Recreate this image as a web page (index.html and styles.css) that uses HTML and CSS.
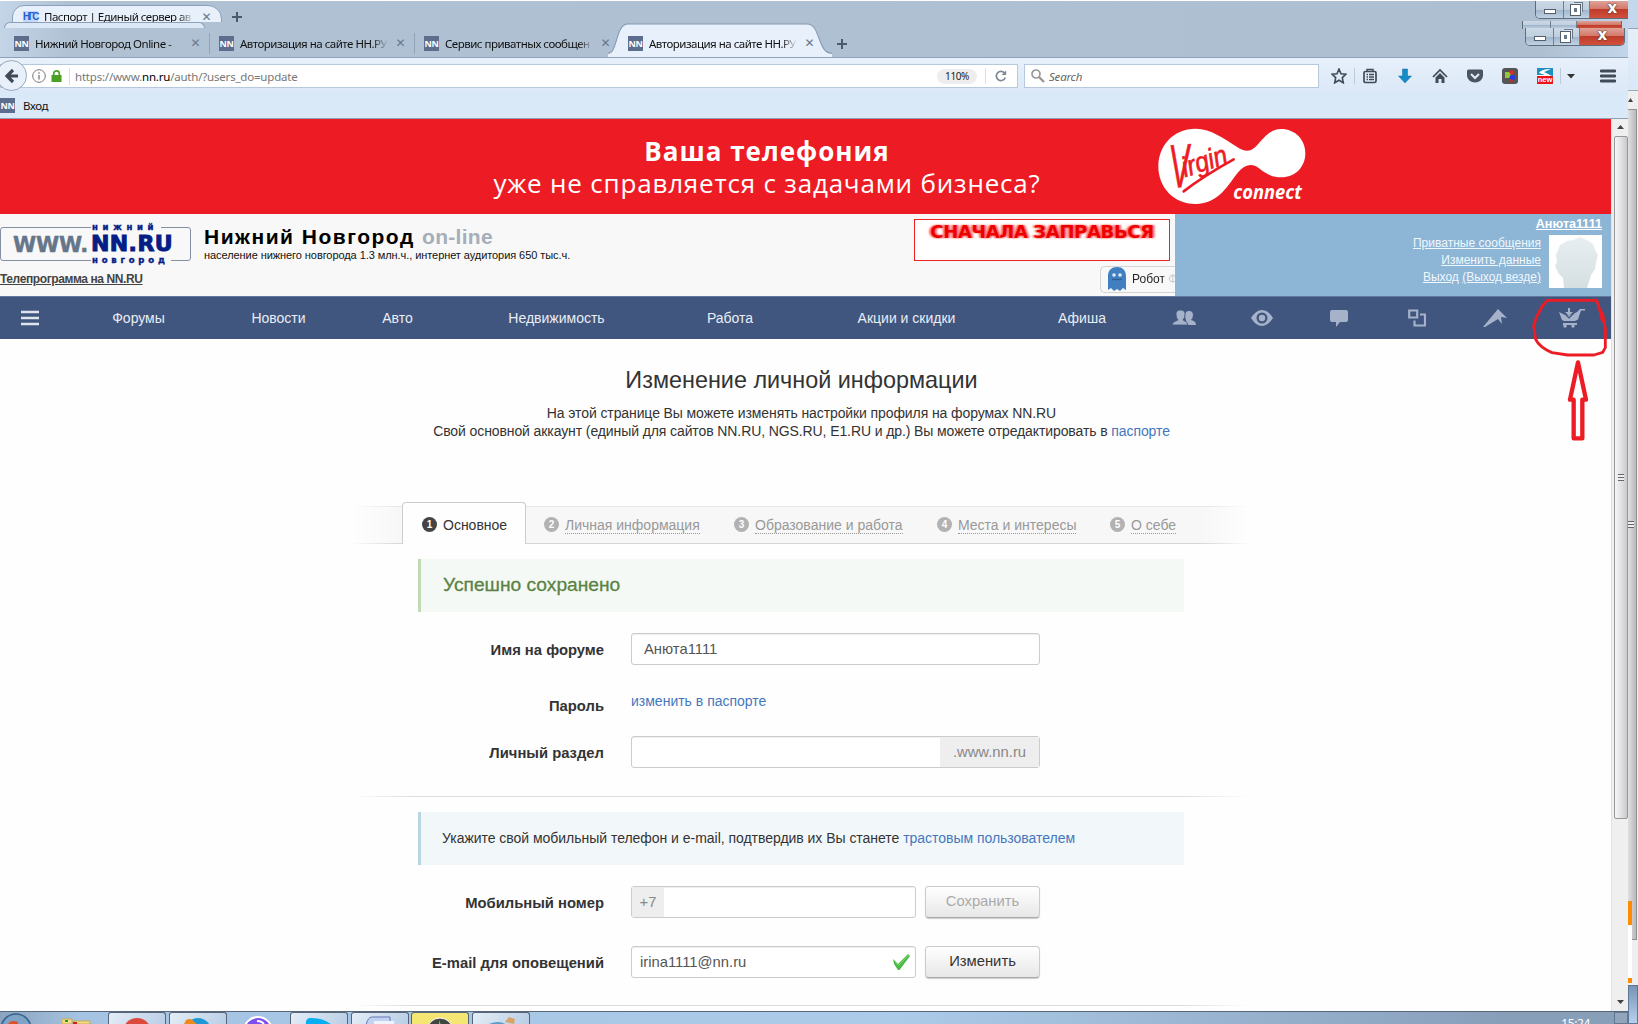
FILE: index.html
```html
<!DOCTYPE html>
<html lang="ru">
<head>
    <meta charset="UTF-8">
    <title>Авторизация на сайте НН.РУ</title>
    <link rel="stylesheet" href="styles.css">
</head>
<body>
<div class="desktop">
    <div class="window">
        <div class="titlebar">
            <div class="back-tabs">
                <div class="tab tab-back"><span class="ngs">НГС</span><span class="tab-text">Паспорт | Единый сервер ав</span><b class="x">✕</b></div>
                <svg class="plus" viewBox="0 0 10 10"><path d="M5 0v10M0 5h10"/></svg>
            </div>
            <div class="front-tabs">
                <div class="tab"><span class="nn">NN</span><span class="tab-text">Нижний Новгород Online -</span><b class="x">✕</b></div>
                <div class="tab"><span class="nn">NN</span><span class="tab-text">Авторизация на сайте НН.РУ</span><b class="x">✕</b></div>
                <div class="tab no-line"><span class="nn">NN</span><span class="tab-text">Сервис приватных сообщен</span><b class="x">✕</b></div>
                <div class="tab active">
                    <svg class="tab-shape" viewBox="0 0 224 32" preserveAspectRatio="none"><path d="M0 29C10 29 8 1 20 1H199C213 1 209 29 224 29V32H0z" fill="#e7f0fb"/><path d="M0 28.500C10 28.500 7 1 20 1H199C213 1 209 28.500 224 28.500" fill="none" stroke="#8499b2"/></svg>
                    <span class="nn">NN</span><span class="tab-text">Авторизация на сайте НН.РУ</span><b class="x">✕</b>
                </div>
                <svg class="plus" viewBox="0 0 10 10"><path d="M5 0v10M0 5h10"/></svg>
            </div>
            <div class="old-edge"></div>
            <div class="controls controls-back"><i></i><i></i><i class="close"></i></div>
            <div class="controls controls-top"><i><u></u></i><i><s></s></i><i class="close">x</i></div>
            <div class="controls controls-front"><i><u></u></i><i><s></s></i><i class="close">x</i></div>
        </div>

        <div class="toolbar">
            <div class="urlbar">
                <div class="back-btn"><svg width="16" height="16" viewBox="0 0 16 16"><path d="M14 8H3M9 2L3 8l6 6" fill="none" stroke="#414b57" stroke-width="3.200"/></svg></div>
                <svg class="info" width="14" height="14" viewBox="0 0 14 14"><circle cx="7" cy="7" r="6.300" fill="none" stroke="#777"/><path d="M7 6v4.500M7 3.200v1.500" stroke="#777" stroke-width="1.300"/></svg>
                <svg class="lock" width="11" height="12" viewBox="0 0 11 12"><path d="M2.700 6V3.500a2.800 2.600 0 0 1 5.600 0V6" fill="none" stroke="#4aa02c" stroke-width="1.700"/><rect x=".5" y="5" width="10" height="7" fill="#4a9f25"/></svg>
                <span class="url">https://www.<b>nn.ru</b>/auth/?users_do=update</span>
                <span class="zoom">110%</span>
                <svg class="reload" width="12" height="12" viewBox="0 0 12 12"><path d="M9.500 3A4.600 4.600 0 1 0 10.300 7.500" fill="none" stroke="#7d8896" stroke-width="1.700"/><path d="M11.200.5V5H6.500z" fill="#7d8896"/></svg>
            </div>
            <div class="searchbar">
                <svg width="14" height="14" viewBox="0 0 14 14"><circle cx="5" cy="5" r="4" fill="none" stroke="#999" stroke-width="1.700"/><path d="M8 8l5 5" stroke="#999" stroke-width="2.400"/></svg>
                <span>Search</span>
            </div>
            <div class="tools">
                <svg class="split" viewBox="0 0 16 16"><path d="M8 1l2 4.700 5 .5-3.700 3.400 1 5.200L8 12.200l-4.300 2.600 1-5.200L1 6.200l5-.5z" fill="none" stroke="#414b57" stroke-width="1.600"/></svg>
                <svg viewBox="0 0 16 16"><rect x="2" y="3.500" width="12" height="11" rx="1.500" fill="none" stroke="#414b57" stroke-width="1.700"/><path d="M5 3V1.500h6V3M4.500 6.500h1.500M7 6.500h5M4.500 9h1.500M7 9h5M4.500 11.500h1.500M7 11.500h5" stroke="#414b57" stroke-width="1.400" fill="none"/></svg>
                <svg viewBox="0 0 16 16"><path d="M5.500 1h5v7h4L8 15 1.500 8h4z" fill="#168cc9" stroke="#0f6fa6" stroke-width=".5"/></svg>
                <svg viewBox="0 0 16 16"><path d="M1 9l7-7 7 7" fill="none" stroke="#414b57" stroke-width="1.700"/><path d="M3.500 9.500L8 5l4.500 4.500V15h-3v-4h-3v4h-3z" fill="#414b57"/></svg>
                <svg viewBox="0 0 16 16"><path d="M0 3q0-1.500 1.500-1.500h13Q16 1.500 16 3v4.500a8 7 0 0 1-16 0z" fill="#4a5462"/><path d="M4 6l4 4 4-4" fill="none" stroke="#e3edf8" stroke-width="2"/></svg>
                <svg viewBox="0 0 16 16"><rect width="16" height="16" rx="3" fill="#555"/><path d="M3 4h4l2 2-2 4H3z" fill="#91c83a"/><circle cx="10" cy="4.500" r="2.300" fill="#dc2b2b"/><rect x="8" y="7" width="5" height="5" rx="2" fill="#2439e7"/><circle cx="9" cy="12.500" r="1.500" fill="#d92222"/></svg>
                <svg class="split" viewBox="0 0 16 16"><rect width="16" height="16" fill="#1e8fbe"/><path d="M2 5q2-4 12-4L7 4l8 4H0V7h8z" fill="#fff"/><rect y="8" width="16" height="8" rx="1" fill="#f01313"/><text x="8" y="14.300" text-anchor="middle" class="new">new</text></svg>
                <svg class="caret" viewBox="0 0 16 16"><path d="M4 6h8l-4 4.500z" fill="#333"/></svg>
                <svg viewBox="0 0 16 16"><path d="M1 3h14M1 8h14M1 13h14" stroke="#414b57" stroke-width="2.800" stroke-linecap="round"/></svg>
            </div>
        </div>
        <div class="bookmarks"><span class="nn">NN</span><span>Вход</span></div>

        <div class="viewport">
            <div class="page">
                <div class="banner">
                    <div class="banner-text">
                        <strong>Ваша телефония</strong>
                        <span>уже не справляется с задачами бизнеса?</span>
                    </div>
                    <svg class="virgin" width="150" height="80" viewBox="0 0 450 240">
                        <path d="M115 2C163 2 206 35 239 56C262 72 280 72 295 57C318 34 336 3 372 3C415 3 445 35 445 76C445 117 415 148 373 148C346 148 327 138 306 121C286 105 264 109 244 132C216 165 188 228 115 228C50 228 4 178 4 115C4 52 50 2 115 2z" fill="#fff"/>
                        <g class="virgin-name">
                            <text class="virgin-v" transform="translate(42 180) rotate(-4)" textLength="62" lengthAdjust="spacingAndGlyphs">V</text>
                            <text transform="translate(84 148) rotate(-18)" textLength="140" lengthAdjust="spacingAndGlyphs">irgin</text>
                        </g>
                        <path d="M80 190C125 155 165 130 230 94" fill="none" stroke="#ed1c24" stroke-width="8" stroke-linecap="round"/>
                        <text x="229" y="212" textLength="205" lengthAdjust="spacingAndGlyphs" class="virgin-connect">connect</text>
                    </svg>
                </div>

                <div class="header">
                    <div class="brand">
                        <div class="brand-row">
                            <div class="logo">
                                <span class="logo-www">WWW.</span>
                                <div class="logo-nn"><small>нижний</small><b>NN.RU</b><small class="low">новгород</small></div>
                            </div>
                            <div class="brand-text">
                                <div class="brand-title">Нижний Новгород <span>on-line</span></div>
                                <div class="brand-sub">население нижнего новгорода 1.3 млн.ч., интернет аудитория 650 тыс.ч.</div>
                            </div>
                        </div>
                        <a class="tele">Телепрограмма на NN.RU</a>
                    </div>
                    <div class="promo">
                        <div class="promo-box">СНАЧАЛА ЗАПРАВЬСЯ</div>
                        <div class="robot">
                            <svg width="18" height="24" viewBox="0 0 18 24"><path d="M0 9C0 3 4 0 9 0s9 3 9 9v14l-3-2-3 3-3-2-3 2-3-3-3 2z" fill="#427fc0"/><circle cx="6" cy="8" r="1.800" fill="#dcecff"/><circle cx="12" cy="8" r="1.800" fill="#dcecff"/><path d="M4 13l2-1 2 1 2-1 2 1 2-1" fill="none" stroke="#235486"/></svg>
                            <span>Робот Ф</span>
                        </div>
                    </div>
                    <div class="user">
                        <a class="user-name">Анюта1111</a>
                        <div class="user-row">
                            <div class="user-links">
                                <a>Приватные сообщения</a>
                                <a>Изменить данные</a>
                                <div><a>Выход</a> <a>(Выход везде)</a></div>
                            </div>
                            <svg class="avatar" width="53" height="53" viewBox="0 0 53 53"><defs><linearGradient id="av" x2="0" y2="1"><stop stop-color="#e8eef1"/><stop offset="1" stop-color="#d5dfe1"/></linearGradient></defs><rect width="53" height="53" fill="#fff"/><path d="M15 53L14 43 10 39 6 31 8 27 7 20 11 10 18 6 24 5 31 2 38 5 44 9 46 15 49 20 47 27 46 34 42 40 38 53z" fill="url(#av)"/></svg>
                        </div>
                    </div>
                </div>

                <div class="nav">
                    <svg width="18" height="16" viewBox="0 0 18 16"><path d="M0 2h18M0 8h18M0 14h18" stroke="#dfe4ec" stroke-width="2.400"/></svg>
                    <a>Форумы</a>
                    <a>Новости</a>
                    <a>Авто</a>
                    <a>Недвижимость</a>
                    <a>Работа</a>
                    <a>Акции и скидки</a>
                    <a class="last">Афиша</a>
                    <svg class="ico" width="24" height="16" viewBox="0 0 24 16"><path d="M13 6q0-5 4-5t4 4q0 3-2 5 5 1 5 5h-9z"/><path d="M0 15q0-3 6-5Q4 8 4 4q0-4 4.500-4T13 4q0 4-2 6 5 2 5 5z" stroke="#40567f" stroke-width=".8"/></svg>
                    <svg class="ico" width="22" height="16" viewBox="0 0 22 16"><path fill-rule="evenodd" d="M0 8Q5 0 11 0t11 8q-5 8-11 8T0 8zM11 2.500a5.500 5.500 0 1 0 0 11a5.500 5.500 0 0 0 0-11z"/><circle cx="11" cy="8" r="3.200"/></svg>
                    <svg class="ico" width="18" height="18" viewBox="0 0 18 18"><path d="M2 1h14q2 0 2 2v8q0 2-2 2h-6l-4 5v-5H2q-2 0-2-2V3q0-2 2-2z"/></svg>
                    <svg width="18" height="18" viewBox="0 0 18 18"><path d="M1.200 1.500h8v7h-8zM12 5.500h5v11H6.500v-5" fill="none" stroke="#a5b2c9" stroke-width="2.200"/></svg>
                    <svg class="ico" width="24" height="18" viewBox="0 0 24 18"><path d="M15 0l9 9-6-1 1 7-4-5-13 8H0z"/></svg>
                    <svg class="ico" width="26" height="20" viewBox="0 0 26 20"><path d="M0 4l4 2 6 2 4-2 4-2 3-3h5v1.500h-4l-3 9-3 1.500H5L3 12zM9 0h2v4h3l-4 4-4-4h3zM4 15h14v2H4z"/><circle cx="6" cy="18" r="1.700"/><circle cx="14" cy="18" r="1.700"/><path d="M5 5l5 5 5-5" fill="none" stroke="#40567f" stroke-width="1.200"/></svg>
                </div>

                <div class="intro">
                    <h1>Изменение личной информации</h1>
                    <p>На этой странице Вы можете изменять настройки профиля на форумах NN.RU</p>
                    <p>Свой основной аккаунт (единый для сайтов NN.RU, NGS.RU, E1.RU и др.) Вы можете отредактировать в <a>паспорте</a></p>
                </div>

                <div class="settings">
                    <div class="steps">
                        <div class="step current"><i>1</i><span>Основное</span></div>
                        <div class="step s2"><i>2</i><span>Личная информация</span></div>
                        <div class="step s3"><i>3</i><span>Образование и работа</span></div>
                        <div class="step s4"><i>4</i><span>Места и интересы</span></div>
                        <div class="step s5"><i>5</i><span>О себе</span></div>
                    </div>

                    <div class="note success">Успешно сохранено</div>
                    <div class="row row-name">
                        <label>Имя на форуме</label>
                        <div class="field field-name">Анюта1111</div>
                    </div>
                    <div class="row row-pass">
                        <label>Пароль</label>
                        <a>изменить в паспорте</a>
                    </div>
                    <div class="row row-section">
                        <label>Личный раздел</label>
                        <div class="field"><span class="suffix">.www.nn.ru</span></div>
                    </div>
                    <div class="line"></div>
                    <div class="note trust">Укажите свой мобильный телефон и e-mail, подтвердив их Вы станете&nbsp;<a>трастовым пользователем</a></div>
                    <div class="row row-phone">
                        <label>Мобильный номер</label>
                        <div class="field short"><span class="prefix">+7</span></div>
                        <div class="btn disabled">Сохранить</div>
                    </div>
                    <div class="row row-mail">
                        <label>E-mail для оповещений</label>
                        <div class="field short mail">irina1111@nn.ru
                            <svg width="17" height="16" viewBox="0 0 17 16"><path d="M0 5l5 5L15 0l2 2L6.500 16H5L1 10z" fill="#4cb848"/><path d="M1 6l4.500 5.500L15.500 1" fill="none" stroke="#7fdc70"/></svg>
                        </div>
                        <div class="btn">Изменить</div>
                    </div>
                    <div class="line line-last"></div>
                </div>
            </div>
            <div class="scrollbar">
                <span class="arrow up"></span>
                <div class="thumb"><i></i></div>
                <span class="arrow down"></span>
            </div>
        </div>

        <div class="taskbar">
            <div class="task start"><svg width="34" height="12" viewBox="0 0 34 12"><circle cx="16" cy="17" r="15" fill="#7fa3c6" stroke="#35618f" stroke-width="1.500"/><path d="M8 12q3-5 10-2v2z" fill="#e04f25"/></svg></div>
            <div class="task plain"><svg width="30" height="12" viewBox="0 0 30 12"><path d="M0 7h10v5H0zM12 9h16v3H12z" fill="#f3dd8c" stroke="#c9a848"/><path d="M3 8h3v2H3z" fill="#1aa51a"/><path d="M11 10h4v2h-4z" fill="#c22"/></svg></div>
            <div class="task"><svg width="28" height="12" viewBox="0 0 28 12"><circle cx="14" cy="19" r="14" fill="#dc4a3d"/></svg></div>
            <div class="task"><svg width="28" height="12" viewBox="0 0 28 12"><circle cx="14" cy="18" r="13" fill="#1d9ad6"/><path d="M0 12q1-7 7-6l7 6z" fill="#f08a1c"/></svg></div>
            <div class="task plain"><svg width="28" height="12" viewBox="0 0 28 12"><circle cx="14" cy="19" r="14" fill="#7b50ef" stroke="#fff" stroke-width="2"/><path d="M13 9q6 0 7 4" fill="none" stroke="#fff" stroke-width="2"/></svg></div>
            <div class="task"><svg width="28" height="12" viewBox="0 0 28 12"><path d="M1 12Q0 4 7 5q12 0 20 7z" fill="#07aef2"/></svg></div>
            <div class="task"><svg width="32" height="12" viewBox="0 0 32 12"><path d="M2 12q2-8 6-8h18v8" fill="#c2d3f2" stroke="#6279b5"/><path d="M10 8h20v4H10z" fill="#eef3fc"/></svg></div>
            <div class="task yellow"><svg width="28" height="12" viewBox="0 0 28 12"><circle cx="14" cy="18" r="13" fill="#414641" stroke="#fff"/><path d="M13 7l2 5h-2z" fill="#56d34c"/></svg></div>
            <div class="task"><svg width="32" height="12" viewBox="0 0 32 12"><path d="M4 12q10-4 16 0" fill="none" stroke="#5f9bc8" stroke-width="2"/><path d="M20 9l4-5 6 2-1 5z" fill="#d9a468"/></svg></div>
            <span class="clock">15:24</span>
            <span class="show-desktop"></span>
        </div>
    </div>

    <!-- edge of the window behind -->
    <div class="behind">
        <div class="behind-title"></div>
        <div class="behind-tools"></div>
        <div class="behind-top"><span class="arrow up"></span></div>
        <div class="behind-thumb"><i></i></div>
        <div class="behind-end"></div>
        <div class="behind-task"></div>
        <span class="orange o1"></span>
        <span class="orange o2"></span>
    </div>

    <svg class="marker" width="100" height="160" viewBox="1140 510 300 480">
        <path d="M1222 541H1370L1378 565 1387 603V578L1396 625V683L1388 697 1362 705H1283L1236 698Q1198 681 1187 658L1181 618 1190 590 1207 558z" fill="none" stroke="#ed1c24" stroke-width="8.500" stroke-linejoin="round"/>
        <path d="M1314 727L1338 839H1327V955H1301V839H1290z" fill="none" stroke="#ed1c24" stroke-width="13" stroke-linejoin="round"/>
    </svg>
</div>
</body>
</html>
```

FILE: styles.css
```css
* {
    box-sizing: border-box;
}
body {
    margin: 0;
    background: #fff;
    font-family: "Liberation Sans", Arial, sans-serif;
    font-size: 14px;
    color: #333;
}
svg {
    display: block;
    flex: none;
}
.desktop {
    position: relative;
    display: flex;
    width: 1638px;
    height: 1024px;
    overflow: hidden;
}
.window {
    display: flex;
    flex-direction: column;
    width: 1628px;
}

/* title bar */
.titlebar {
    position: relative;
    height: 58px;
    border-top: 1px solid #fff;
    border-bottom: 1px solid #8ea2ba;
    background: linear-gradient(90deg, #c3d5e6 0, #afc1d3 70px, #adbfd1 1540px, #c3d5e9 100%);
    font-family: "Noto Sans", sans-serif;
    font-size: 11.500px;
    letter-spacing: -0.5px;
    color: #111;
}
.back-tabs {
    display: flex;
    align-items: center;
    height: 21px;
    padding: 2px 0 0 12px;
    overflow: hidden;
}
.front-tabs {
    display: flex;
    height: 35px;
    padding-top: 8px;
}
.tab {
    position: relative;
    display: flex;
    align-items: center;
    width: 205px;
    height: 28px;
    padding: 0 5px 2px 14px;
}
.front-tabs .tab:after {
    content: "";
    position: absolute;
    right: -5px;
    top: 3px;
    height: 21px;
    border-right: 1px solid #91a4ba;
}
.front-tabs .no-line:after,
.front-tabs .active:after {
    display: none;
}
.tab-back {
    width: 210px;
    height: 30px;
    margin-top: 14px;
    padding: 0 10px 6px;
    border: 1px solid #8ba0b8;
    border-radius: 12px 14px 0 0;
    background: #e7f0fb;
}
.tab-text {
    flex: 1;
    margin: 0 4px 0 6px;
    overflow: hidden;
    white-space: nowrap;
    -webkit-mask-image: linear-gradient(90deg, #000 88%, transparent 98%);
    mask-image: linear-gradient(90deg, #000 88%, transparent 98%);
}
.tab-shape {
    position: absolute;
    left: -6px;
    top: -7px;
    width: 224px;
    height: 34px;
}
.active {
    margin-left: -1px;
}
.active .nn, .active .tab-text, .active .x {
    position: relative;
}
.nn {
    flex: none;
    width: 15px;
    height: 15px;
    background: #5c6d8e;
    color: #fff;
    font: bold 9px/15px "Open Sans", sans-serif;
    letter-spacing: -0.3px;
    text-align: center;
}
.ngs {
    width: 15px;
    background: #c5d9fa;
    color: #2560d8;
    font: bold 10px/12px "Liberation Sans", sans-serif;
    letter-spacing: -1.8px;
}
.x {
    font: bold 12px/12px "DejaVu Sans", sans-serif;
    color: #68788c;
}
.plus {
    width: 10px;
    height: 10px;
    stroke: #4c5a6b;
    stroke-width: 2;
}
.back-tabs .plus {
    margin: 8px 0 0 10px;
}
.front-tabs .plus {
    margin: 9px 0 0 18px;
}
.old-edge {
    position: absolute;
    left: 4px;
    top: 21px;
    width: 201px;
    height: 6px;
    border: 1px solid #8ba0b8;
    border-bottom: 0;
    border-radius: 14px 14px 0 0;
    background: #dce8f5;
}
.controls {
    position: absolute;
    display: grid;
    grid-template-columns: 28px 26px 46px;
    width: 100px;
    height: 18px;
    overflow: hidden;
    border: 1px solid #5f6c7b;
    border-top: 0;
    border-radius: 0 0 5px 5px;
}
.controls i {
    display: flex;
    align-items: center;
    justify-content: center;
    border-right: 1px solid #6f7e90;
    background: linear-gradient(#ccd9e6, #c0cfde 50%, #9fb4ca 51%, #c1d2e3);
    font: bold 15px/14px "DejaVu Sans", sans-serif;
    color: #fff;
    text-shadow: 0 0 2px #433, 0 0 1px #433;
}
.controls .close {
    padding: 0 2px 3px 0;
    border: 0;
    background: linear-gradient(#dfa399, #d4796b 45%, #bd3d2a 50%, #d2503b);
}
.controls u {
    width: 12px;
    height: 5px;
    margin-top: 4px;
    border: 1px solid #555f6c;
    background: #fff;
}
.controls s {
    width: 9px;
    height: 10px;
    margin: 1px 3px 0 0;
    border: 3px solid #fff;
    outline: 1px solid #555f6c;
    background: #66768a;
    box-shadow: 2px -2px 0 #dde5ee, 3px -3px 0 #68788a;
}
.controls-top {
    right: -7px;
    top: 0;
}
.controls-back {
    right: 6px;
    top: 20px;
    height: 8px;
    border-bottom: 0;
    border-radius: 0;
}
.controls-front {
    right: 3px;
    top: 27px;
}

/* toolbar */
.toolbar {
    display: flex;
    height: 36px;
    padding-top: 6px;
    background: linear-gradient(#e7f0fb, #dbe8f7);
    font-family: "Noto Sans", sans-serif;
}
.urlbar {
    position: relative;
    display: flex;
    flex: none;
    align-items: center;
    width: 1018px;
    height: 24px;
    border: 1px solid #b6c8db;
    background: #fff;
}
.back-btn {
    position: absolute;
    left: -5px;
    top: -5px;
    display: flex;
    align-items: center;
    justify-content: center;
    width: 31px;
    height: 31px;
    border: 1px solid #97a9bd;
    border-radius: 50%;
    background: #e8f0fa;
}
.info {
    margin-left: 31px;
}
.lock {
    margin-left: 5px;
}
.url {
    flex: 1;
    margin-left: 7px;
    padding-left: 5px;
    border-left: 1px solid #ddd;
    font-size: 11.500px;
    line-height: 17px;
    letter-spacing: -0.2px;
    color: #777;
}
.url b {
    font-weight: normal;
    color: #000;
}
.zoom {
    width: 40px;
    margin-right: 8px;
    border-radius: 8px;
    background: #eee;
    font-size: 10px;
    line-height: 15px;
    text-align: center;
    letter-spacing: -0.4px;
    color: #222;
}
.reload {
    box-sizing: content-box;
    padding: 2px 9px;
    border-left: 1px solid #ddd;
    margin-right: 1px;
}
.searchbar {
    display: flex;
    flex: none;
    align-items: center;
    gap: 4px;
    width: 295px;
    height: 24px;
    margin-left: 6px;
    padding-left: 6px;
    border: 1px solid #b6c8db;
    background: #fff;
    font-size: 11.500px;
    font-style: italic;
    letter-spacing: -0.2px;
    color: #666;
}
.tools {
    display: grid;
    flex: none;
    grid-template-columns: 31px repeat(6, 35px) 28px 21px;
    align-items: center;
    height: 24px;
    margin-left: 12px;
}
.tools svg {
    width: 16px;
    height: 16px;
}
.tools .split {
    box-sizing: content-box;
    padding-right: 7px;
    border-right: 1px solid #bccbdb;
}
.tools .caret {
    margin-left: -9px;
}
.new {
    font: bold 7.500px "Liberation Sans", sans-serif;
    fill: #fff;
}
.bookmarks {
    display: flex;
    align-items: center;
    gap: 8px;
    height: 25px;
    border-bottom: 1px solid #8da0b6;
    background: #dae9f8;
    font-family: "Noto Sans", sans-serif;
    font-size: 11.500px;
    letter-spacing: -0.4px;
    color: #111;
}

/* page */
.viewport {
    display: flex;
    height: 893px;
}
.page {
    width: 1611px;
    overflow: hidden;
    background: #fefefe;
}
.banner {
    display: flex;
    height: 95px;
    background: #ed1c24;
    color: #fff;
    font-family: "Open Sans", "Noto Sans", sans-serif;
}
.banner-text {
    display: flex;
    flex-direction: column;
    align-items: center;
    width: 550px;
    margin: 15px 0 0 492px;
    white-space: nowrap;
}
.banner-text strong {
    font-size: 26px;
    line-height: 34px;
    letter-spacing: 1px;
}
.banner-text span {
    font-size: 26px;
    line-height: 30px;
    letter-spacing: 0.8px;
}
.virgin {
    margin: 9px 0 0 115px;
}
.virgin-name {
    font: italic 84px "Liberation Sans", sans-serif;
    fill: #ed1c24;
    stroke: #ed1c24;
    stroke-width: 2;
}
.virgin-v {
    font-size: 185px;
}
.virgin-connect {
    font: italic bold 56px "Open Sans", sans-serif;
    fill: #fff;
}
.header {
    display: flex;
    height: 82px;
    background: #f8f8f8;
    color: #111;
}
.brand {
    width: 914px;
    padding-top: 11px;
}
.brand-row {
    display: flex;
    height: 45px;
}
.logo {
    display: flex;
    width: 191px;
    height: 34px;
    margin: 2px 13px 0 0;
    padding-left: 12px;
    border: 1px solid #8290a3;
    border-radius: 3px;
}
.logo-www {
    width: 78px;
    font: bold 21px/35px "DejaVu Sans", sans-serif;
    letter-spacing: -0.2px;
    -webkit-text-stroke: 0.5px #65758a;
    color: #65758a;
}
.logo-nn {
    display: flex;
    flex-direction: column;
    width: 84px;
    height: 42px;
    margin-top: -5px;
    font-family: "DejaVu Sans", sans-serif;
    color: #061d86;
}
.logo-nn small {
    width: 70px;
    padding-left: 1px;
    background: #f8f8f8;
    font: bold 8.500px/9px "DejaVu Sans", sans-serif;
    letter-spacing: 4.700px;
    white-space: nowrap;
    -webkit-text-stroke: 0.4px #061d86;
}
.logo-nn .low {
    width: 80px;
    letter-spacing: 3.800px;
}
.logo-nn b {
    font-size: 22px;
    line-height: 24px;
    letter-spacing: 0.4px;
    -webkit-text-stroke: 1px #061d86;
}
.brand-title {
    font-size: 21px;
    line-height: 23px;
    font-weight: bold;
    letter-spacing: 1.500px;
    color: #000;
}
.brand-title span {
    color: #a5aeb9;
    letter-spacing: 0.300px;
}
.brand-sub {
    font-size: 11px;
    line-height: 14px;
    letter-spacing: -0.07px;
}
.tele {
    font-size: 12px;
    font-weight: bold;
    line-height: 16px;
    text-decoration: underline;
    letter-spacing: -0.4px;
    color: #444;
}
.promo {
    width: 261px;
    padding-top: 5px;
}
.promo-box {
    width: 256px;
    height: 42px;
    padding-top: 2px;
    border: 1px solid #e22;
    background: #fff;
    font: bold 18px/19px "DejaVu Sans", sans-serif;
    letter-spacing: -0.35px;
    text-align: center;
    white-space: nowrap;
    color: #ed0000;
    text-shadow: -2px 0 2px #f66, 2px 0 2px #f66;
}
.robot {
    display: flex;
    align-items: center;
    gap: 6px;
    width: 75px;
    height: 27px;
    margin: 5px 0 0 186px;
    padding-left: 7px;
    border: 1px solid #d4d4d4;
    border-right: 0;
    border-radius: 5px 0 0 5px;
    font-size: 12px;
    overflow: hidden;
    white-space: nowrap;
}
.robot span {
    background: linear-gradient(90deg, #222 31px, #ccc 34px);
    -webkit-background-clip: text;
    background-clip: text;
    color: transparent;
}
.user {
    width: 436px;
    padding: 1px 9px 0 0;
    background: #8cb5d6;
    text-align: right;
    color: #f0f7fc;
}
.user a {
    text-decoration: underline;
}
.user-name {
    display: block;
    font-size: 12.600px;
    line-height: 19px;
    font-weight: bold;
    color: #fff;
}
.user-row {
    display: flex;
    justify-content: flex-end;
    gap: 8px;
    margin-top: 1px;
}
.user-links {
    display: flex;
    flex-direction: column;
    font-size: 12px;
    line-height: 17px;
}
.nav {
    display: grid;
    grid-template-columns: 60px 157px 123px 115px 203px 144px 209px 134px repeat(6, 77.700px);
    align-items: center;
    justify-items: center;
    height: 43px;
    border-top: 1px solid #62779a;
    background: #40567f;
    color: #e9edf4;
}
.nav .last {
    padding-left: 8px;
}
.nav .ico {
    fill: #a5b2c9;
}
.intro {
    height: 163px;
    padding-top: 26px;
    margin-right: 8px;
    text-align: center;
}
.intro h1 {
    margin: 0 0 9px;
    font-size: 23.400px;
    line-height: 30px;
    font-weight: normal;
}
.intro p {
    margin: 0;
    line-height: 18px;
    letter-spacing: -0.1px;
}
.intro a, .row a, .note a {
    color: #4577bd;
}

/* profile form */
.settings {
    width: 898px;
    margin-left: 352px;
}
.steps {
    display: flex;
    align-items: flex-end;
    height: 42px;
    padding-left: 50px;
    background:
        linear-gradient(90deg, transparent, #d6d6d6 50px, #d6d6d6 848px, transparent) 0 100% / 100% 1px no-repeat,
        linear-gradient(90deg, transparent, #e6e6e6 50px, #e6e6e6 848px, transparent) 0 4px / 100% 1px no-repeat,
        linear-gradient(90deg, transparent, #f7f7f7 50px, #f7f7f7 848px, transparent) 0 4px / 100% 38px no-repeat;
    color: #999;
}
.step {
    display: flex;
    align-items: center;
    gap: 6px;
    height: 38px;
    white-space: nowrap;
}
.step span {
    padding-top: 2px;
    border-bottom: 1px dotted #999;
    line-height: 15px;
}
.step i {
    width: 15px;
    height: 15px;
    border-radius: 50%;
    background: #b2b2b2;
    color: #fff;
    font: bold 10px/15px "Liberation Sans", sans-serif;
    text-align: center;
}
.current {
    width: 124px;
    height: 42px;
    padding: 3px 0 0 19px;
    border: 1px solid #ccc;
    border-bottom: 0;
    border-radius: 4px 4px 0 0;
    background: #fefefe;
    color: #333;
}
.current i {
    background: #444;
}
.current span {
    border: 0;
}
.s2 {
    width: 190px;
    padding-left: 18px;
}
.s3 {
    width: 203px;
    padding-left: 18px;
}
.s4 {
    width: 173px;
    padding-left: 18px;
}
.s5 {
    padding-left: 18px;
}
.note {
    display: flex;
    align-items: center;
    width: 766px;
    height: 53px;
    margin-left: 66px;
    padding-left: 22px;
    border-left: 3px solid #c1dab4;
    background: #f5f9f5;
}
.success {
    margin-top: 15px;
    font-size: 19.200px;
    color: #5a8343;
    -webkit-text-stroke: 0.3px #5a8343;
}
.trust {
    margin-top: 15px;
    padding-left: 21px;
    border-color: #b9d5e3;
    background: #f2f7fa;
    letter-spacing: -0.03px;
}
.row {
    display: flex;
    align-items: center;
    height: 32px;
}
.row label {
    width: 252px;
    margin-right: 27px;
    padding-top: 2px;
    font-weight: bold;
    font-size: 14.800px;
    text-align: right;
}
.row-name {
    margin-top: 21px;
}
.row-pass {
    margin-top: 20px;
}
.row-pass label {
    padding-top: 11px;
}
.row-section {
    margin-top: 19px;
}
.row-phone {
    margin-top: 21px;
}
.row-mail {
    margin-top: 28px;
}
.field {
    display: flex;
    align-items: center;
    width: 409px;
    height: 32px;
    border: 1px solid #ccc;
    border-radius: 3px;
    background: #fff;
    box-shadow: inset 0 1px 1px #eee;
    font-size: 14.800px;
    color: #555;
}
.field-name {
    padding-left: 12px;
}
.suffix, .prefix {
    display: flex;
    align-items: center;
    justify-content: center;
    height: 100%;
    background: #eee;
    color: #888;
}
.suffix {
    width: 99px;
    margin-left: auto;
}
.prefix {
    width: 32px;
}
.short {
    width: 285px;
}
.mail {
    justify-content: space-between;
    padding: 0 5px 0 8px;
}
.btn {
    width: 115px;
    height: 32px;
    margin-left: 9px;
    border: 1px solid #ccc;
    border-bottom-color: #aaa;
    border-radius: 4px;
    background: linear-gradient(#fff, #e7e7e7);
    box-shadow: 0 1px 1px #ccc;
    font-size: 14.800px;
    line-height: 29px;
    text-align: center;
}
.disabled {
    color: #aaa;
}
.line {
    height: 1px;
    margin-top: 28px;
    background: linear-gradient(90deg, transparent, #ddd 60px, #ddd 830px, transparent);
}
.line-last {
    margin-top: 27px;
}

/* scroll bars */
.scrollbar {
    display: flex;
    flex-direction: column;
    align-items: center;
    width: 17px;
    padding: 6px 0 7px 1px;
    border-left: 1px solid #e2e2e2;
    background: #efefef;
}
.arrow {
    width: 7px;
    height: 4px;
    background: #444;
}
.up {
    clip-path: polygon(50% 0, 100% 100%, 0 100%);
}
.down {
    margin-top: auto;
    clip-path: polygon(0 0, 100% 0, 50% 100%);
}
.thumb {
    display: flex;
    align-items: center;
    justify-content: center;
    width: 14px;
    height: 683px;
    margin-top: 7px;
    border: 1px solid #989898;
    border-radius: 2px;
    background: linear-gradient(90deg, #f6f6f6, #e2e2e4 50%, #c9c9cd);
}
.thumb i, .behind-thumb i {
    width: 6px;
    height: 7px;
    background: repeating-linear-gradient(#666 0 1px, #eee 1px 3px);
}

/* taskbar */
.taskbar {
    display: flex;
    height: 13px;
    border-top: 1px solid #56677c;
    overflow: hidden;
    background: linear-gradient(90deg, #8ba3bd, #a5c3e2 80px, #accbe9 900px, #889fba 1500px);
}
.task {
    display: flex;
    justify-content: center;
    width: 58px;
    margin-right: 2.600px;
    border: 1px solid #566577;
    border-bottom: 0;
    border-radius: 3px 3px 0 0;
    background: linear-gradient(120deg, #e4edf7, #b9cee5);
}
.plain, .start {
    border: 0;
    background: none;
}
.start {
    width: 45px;
    padding-right: 12px;
}
.yellow {
    background: #f5e572;
}
.clock {
    margin: 5px 24px 0 auto;
    font: 12px/14px "Noto Sans", sans-serif;
    letter-spacing: -0.4px;
    color: #fff;
}
.show-desktop {
    width: 14px;
    border: 1px solid #64788f;
    background: #91a6bd;
}

/* window behind */
.behind {
    position: relative;
    width: 10px;
    background: #efefef;
}
.behind-title {
    height: 29px;
    border-bottom: 1px solid #8ea2ba;
    background: #c4d7eb;
}
.behind-tools {
    height: 62px;
    border-bottom: 1px solid #9dabba;
    background: linear-gradient(#e5eff9, #d9e8f7);
}
.behind-top {
    height: 18px;
    padding-top: 7px;
}
.behind-top .arrow {
    display: block;
    width: 5px;
}
.behind-thumb {
    display: flex;
    align-items: center;
    height: 831px;
    width: 9px;
    border: 1px solid #919191;
    border-left: 0;
    background: linear-gradient(90deg, #e0e0e2, #b8b8bd);
}
.behind-end {
    height: 45px;
}
.behind-task {
    height: 39px;
    border: 1px solid #5d7797;
    background: linear-gradient(#7894b5, #b7d1ec);
}
.orange {
    position: absolute;
    left: 0;
    width: 4px;
    background: #ff8c00;
}
.o1 {
    top: 901px;
    height: 24px;
    box-shadow: 0 24px 0 #fff, 0 48px 0 #fff, 0 53px 0 #fff;
}
.o2 {
    top: 978px;
    height: 5px;
}

.marker {
    position: absolute;
    left: 1520px;
    top: 290px;
}
```
